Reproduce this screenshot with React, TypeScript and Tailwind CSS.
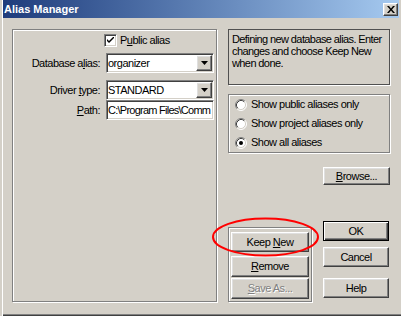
import React from 'react';

// win98 bevels, reused everywhere
const raised =
    'border border-t-white border-l-white border-r-[#404040] border-b-[#404040] shadow-[inset_-1px_-1px_0_#808080,inset_1px_1px_0_#dfdfdf]';
const sunken =
    'border border-t-[#808080] border-l-[#808080] border-r-white border-b-white shadow-[inset_1px_1px_0_#404040,inset_-1px_-1px_0_#d4d0c8]';
const etched = 'border border-[#808080] shadow-[inset_1px_1px_0_#fff,1px_1px_0_#fff]';

const Combo: React.FC<{ value: string }> = ({ value }) => (
    <div className={`flex h-[20px] w-[108px] items-center bg-white ${sunken}`}>
        <span className="flex-1 overflow-hidden pl-[1px] whitespace-nowrap">{value}</span>
        <div
            className={`mr-[1px] flex h-[16px] w-[16px] items-center justify-center bg-[#d4d0c8] ${raised}`}
        >
            <svg width="7" height="4" viewBox="0 0 7 4">
                <path d="M0 0h7L3.5 4z" fill="#000" />
            </svg>
        </div>
    </div>
);

const Radio: React.FC<{ checked?: boolean; label: string }> = ({ checked, label }) => (
    <div className="flex h-[19px] items-center pl-[6px]">
        <svg width="12" height="12" viewBox="0 0 12 12">
            <circle cx="6" cy="6" r="5" fill="#fff" />
            <path d="M2.11 9.89A5.5 5.5 0 0 1 9.89 2.11" stroke="#808080" fill="none" />
            <path d="M9.89 2.11A5.5 5.5 0 0 1 2.11 9.89" stroke="#fff" fill="none" />
            <path d="M2.82 9.18A4.5 4.5 0 0 1 9.18 2.82" stroke="#404040" fill="none" />
            <path d="M9.18 2.82A4.5 4.5 0 0 1 2.82 9.18" stroke="#d4d0c8" fill="none" />
            {checked && <circle cx="6" cy="6" r="2" fill="#000" />}
        </svg>
        <span className="ml-[4px] whitespace-nowrap">{label}</span>
    </div>
);

const Button: React.FC<{ className?: string; children: React.ReactNode }> = ({
    className,
    children,
}) => (
    <div className={`flex items-center justify-center bg-[#d4d0c8] ${raised} ${className ?? ''}`}>
        {children}
    </div>
);

export default function App() {
    return (
        <div className="relative h-[316px] w-[401px] overflow-hidden bg-[#d4d0c8] pr-[2px] pl-[3px] font-['Liberation_Sans',Arial,sans-serif] text-[11px] leading-[13px] tracking-[-0.5px] text-black shadow-[inset_2px_0_0_#d4d0c8,inset_3px_0_0_#fff,inset_0_-1px_0_#404040,inset_0_-2px_0_#808080]">
            {/* title bar */}
            <div className="flex h-[18px] items-center bg-linear-to-r from-[#1f3c7c] to-[#a6caf0] pl-[1px]">
                <span className="flex-1 text-[11px] font-bold tracking-normal text-white">
                    Alias Manager
                </span>
                <div
                    className={`mr-[1px] flex h-[13px] w-[15px] items-center justify-center bg-[#d4d0c8] ${raised}`}
                >
                    <svg width="8" height="7" viewBox="0 0 8 7">
                        <path d="M0 0h2l2 2.5L6 0h2L5 3.5 8 7H6L4 4.5 2 7H0l3-3.5z" fill="#000" />
                    </svg>
                </div>
            </div>

            <div className="flex pt-[11px] pl-[9px]">
                {/* left group */}
                <div className={`flex h-[273px] w-[205px] flex-col ${etched}`}>
                    <div className="mt-[4px] ml-[91px] flex h-[13px] items-center">
                        <div className={`flex h-[13px] w-[13px] items-center justify-center bg-white ${sunken}`}>
                            <svg width="7" height="7" viewBox="0 0 7 7">
                                <path d="M0 2v2l2 2 5-5V-1L2 4z" fill="#000" />
                            </svg>
                        </div>
                        <span className="ml-[3px]">
                            P<span className="underline">u</span>blic alias
                        </span>
                    </div>

                    <div className="mt-[6px] grid grid-cols-[87px_108px] items-center gap-x-[6px]">
                        <span className="text-right">
                            Database a<span className="underline">l</span>ias:
                        </span>
                        <Combo value="organizer" />
                    </div>
                    <div className="mt-[7px] grid grid-cols-[87px_108px] items-center gap-x-[6px]">
                        <span className="text-right">
                            Driver <span className="underline">t</span>ype:
                        </span>
                        <Combo value="STANDARD" />
                    </div>
                    <div className="grid grid-cols-[87px_108px] items-center gap-x-[6px]">
                        <span className="text-right">
                            <span className="underline">P</span>ath:
                        </span>
                        <div className={`flex h-[20px] w-[108px] items-center overflow-hidden bg-white ${sunken}`}>
                            <span className="block w-full overflow-hidden pl-[1px] tracking-[-0.75px] whitespace-nowrap">
                                C:\Program Files\Comm
                            </span>
                        </div>
                    </div>
                </div>

                {/* right column */}
                <div className="ml-[11px] flex w-[162px] flex-col">
                    <div className="h-[56px] border border-[#505050] px-[3px] pt-[3px] leading-[12px] tracking-[-0.6px] whitespace-nowrap shadow-[1px_1px_0_#fff]">
                        Defining new database alias. Enter
                        <br />
                        changes and choose Keep New
                        <br />
                        when done.
                    </div>

                    <div className={`mt-[9px] flex h-[59px] flex-col ${etched}`}>
                        <Radio label="Show public aliases only" />
                        <Radio label="Show project aliases only" />
                        <Radio checked label="Show all aliases" />
                    </div>

                    <Button className="mt-[14px] h-[18px] w-[67px] self-end">
                        <span>
                            <span className="underline">B</span>rowse...
                        </span>
                    </Button>

                    <div className="mt-[36px] flex items-start">
                        <div className={`mt-[6px] flex h-[75px] w-[84px] flex-col px-[2px] pt-[4px] ${etched}`}>
                            <Button className="h-[20px]">
                                <span>
                                    Keep <span className="underline">N</span>ew
                                </span>
                            </Button>
                            <Button className="mt-[4px] h-[21px]">
                                <span>
                                    <span className="underline">R</span>emove
                                </span>
                            </Button>
                            <Button className="mt-[1px] h-[21px] text-[#808080] [text-shadow:1px_1px_0_#fff]">
                                <span>
                                    <span className="underline">S</span>ave As...
                                </span>
                            </Button>
                        </div>

                        <div className="mr-[1px] ml-auto flex w-[66px] flex-col">
                            <div className="flex h-[20px] items-center justify-center border border-black bg-[#d4d0c8] shadow-[inset_1px_1px_0_#fff,inset_-1px_-1px_0_#404040,inset_-2px_-2px_0_#808080]">
                                OK
                            </div>
                            <Button className="mt-[6px] h-[20px]">Cancel</Button>
                            <Button className="mt-[11px] h-[20px]">Help</Button>
                        </div>
                    </div>
                </div>
            </div>

            {/* red annotation ring round Keep New */}
            <svg
                className="pointer-events-none absolute top-[217px] left-[212px]"
                width="107"
                height="40"
                viewBox="0 0 107 40"
            >
                <ellipse cx="53.5" cy="20" rx="52.5" ry="18.5" fill="none" stroke="#ff0000" strokeWidth="2" />
            </svg>
        </div>
    );
}
